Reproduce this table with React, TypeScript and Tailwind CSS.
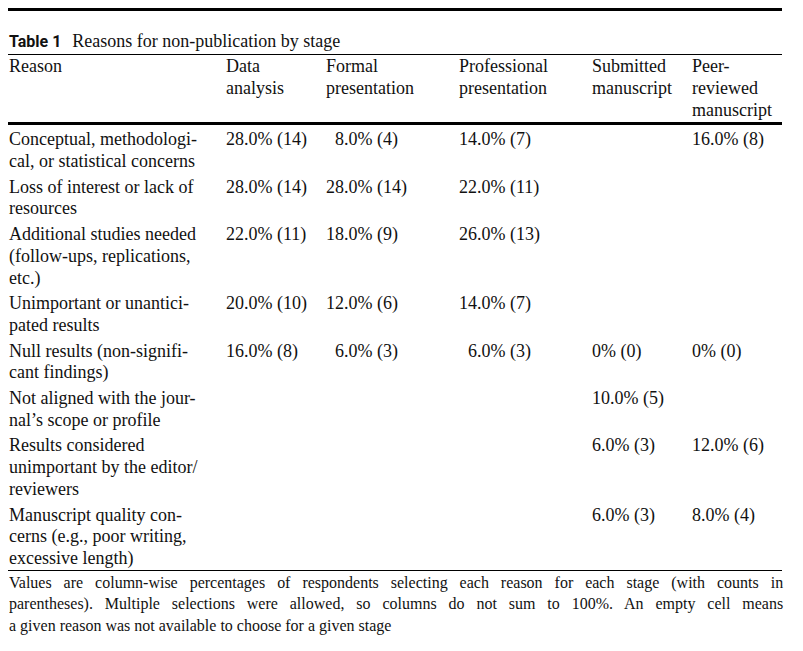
type Cell = { v: string; pad?: boolean } | null;

type Row = { reason: string[]; cells: Cell[] };

const rows: Row[] = [
  {
    reason: ["Conceptual, methodologi-", "cal, or statistical concerns"],
    cells: [{ v: "28.0% (14)" }, { v: "8.0% (4)", pad: true }, { v: "14.0% (7)" }, null, { v: "16.0% (8)" }],
  },
  {
    reason: ["Loss of interest or lack of", "resources"],
    cells: [{ v: "28.0% (14)" }, { v: "28.0% (14)" }, { v: "22.0% (11)" }, null, null],
  },
  {
    reason: ["Additional studies needed", "(follow-ups, replications,", "etc.)"],
    cells: [{ v: "22.0% (11)" }, { v: "18.0% (9)" }, { v: "26.0% (13)" }, null, null],
  },
  {
    reason: ["Unimportant or unantici-", "pated results"],
    cells: [{ v: "20.0% (10)" }, { v: "12.0% (6)" }, { v: "14.0% (7)" }, null, null],
  },
  {
    reason: ["Null results (non-signifi-", "cant findings)"],
    cells: [{ v: "16.0% (8)" }, { v: "6.0% (3)", pad: true }, { v: "6.0% (3)", pad: true }, { v: "0% (0)" }, { v: "0% (0)" }],
  },
  {
    reason: ["Not aligned with the jour-", "nal’s scope or profile"],
    cells: [null, null, null, { v: "10.0% (5)" }, null],
  },
  {
    reason: ["Results considered", "unimportant by the editor/", "reviewers"],
    cells: [null, null, null, { v: "6.0% (3)" }, { v: "12.0% (6)" }],
  },
  {
    reason: ["Manuscript quality con-", "cerns (e.g., poor writing,", "excessive length)"],
    cells: [null, null, null, { v: "6.0% (3)" }, { v: "8.0% (4)" }],
  },
];

const headers = [["Reason"], ["Data", "analysis"], ["Formal", "presentation"], ["Professional", "presentation"], ["Submitted", "manuscript"], ["Peer-", "reviewed", "manuscript"]];

const cols = "grid grid-cols-[217px_100px_133px_133px_100px_1fr] pl-[1px]";

function Lines({ lines }: { lines: string[] }) {
  return (
    <div>
      {lines.map((l, i) => (
        <div key={i} className="whitespace-nowrap">
          {l}
        </div>
      ))}
    </div>
  );
}

export default function App() {
  return (
    <div className="min-h-screen bg-white text-[#111] font-[Liberation_Serif]">
      <div className="ml-[8px] w-[774px] pt-[8px]">
        {/* caption */}
        <div className="border-t-[3px] border-black pt-[20px] pb-[1px] border-b leading-[21.7px] text-[18px] whitespace-nowrap">
          <span className="font-[Roboto] font-bold text-[16px] pl-[1px]">Table 1</span>
          <span className="ml-[11px]">Reasons for non-publication by stage</span>
        </div>

        {/* column heads */}
        <div className={`${cols} text-[18px] leading-[21.7px] pt-[1.5px] pb-[1px] border-b-[3px] border-black`}>
          {headers.map((h, i) => (
            <Lines key={i} lines={h} />
          ))}
        </div>

        <div className="text-[18px] leading-[21.7px] border-b border-black">
          {rows.map((r, i) => (
            <div key={i} className={`${cols} pt-[4px]`}>
              <Lines lines={r.reason} />
              {r.cells.map((c, j) => (
                <div key={j} className={c?.pad ? "pl-[9px] whitespace-nowrap" : "whitespace-nowrap"}>
                  {c ? c.v : ""}
                </div>
              ))}
            </div>
          ))}
        </div>

        {/* footnote, set in a slightly condensed face */}
        <div className="text-[17.5px] leading-[21.7px] pt-[1px] pl-[1px]">
          <div className="w-[847px] origin-left scale-x-[0.914] text-justify [text-align-last:justify] whitespace-nowrap">
            Values are column-wise percentages of respondents selecting each reason for each stage (with counts in
          </div>
          <div className="w-[847px] origin-left scale-x-[0.914] text-justify [text-align-last:justify] whitespace-nowrap">
            parentheses). Multiple selections were allowed, so columns do not sum to 100%. An empty cell means
          </div>
          <div className="w-[847px] origin-left scale-x-[0.914] whitespace-nowrap">
            a given reason was not available to choose for a given stage
          </div>
        </div>
      </div>
    </div>
  );
}
